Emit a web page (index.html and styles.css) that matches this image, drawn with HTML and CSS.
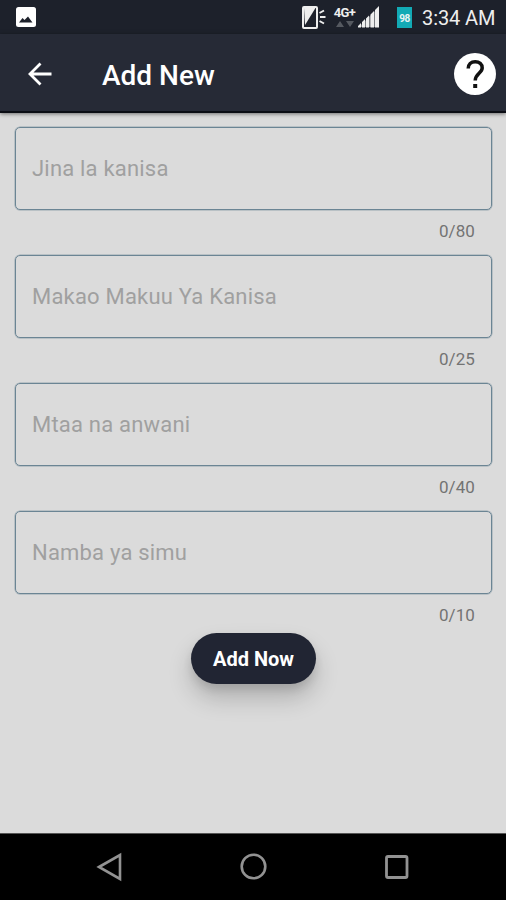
FILE: index.html
```html
<!DOCTYPE html>
<html lang="sw">
<head>
<meta charset="utf-8">
<title>Add New</title>
<link rel="stylesheet" href="styles.css">
</head>
<body>
<div class="screen">
  <div class="status">
    <svg class="photo" width="20" height="20" viewBox="0 0 20 20"><rect width="20" height="20" rx="2.5" fill="#fff"/><path d="M3 15.500 6.500 11l2 2 3.500-3.500 4.500 6z" fill="#1d212b"/></svg>
    <svg class="vibrate" width="24" height="23" viewBox="0 0 24 23"><rect x="1" y="1" width="14" height="21" rx="1" fill="#1d212b" stroke="#eee" stroke-width="2"/><path d="M2 2h11.500L3 19z" fill="#eee"/><path d="m17.500 7 4.500-2.500M18 11h5.500M17.500 15l4.500 2.500" stroke="#eee" stroke-width="2"/></svg>
    <div class="network">
      <span class="network-type">4G+</span>
      <svg width="18" height="6" viewBox="0 0 18 6"><path d="m0 6 4-6 4 6zM10 0h8l-4 6z" fill="#555960"/></svg>
    </div>
    <svg class="signal" width="22" height="22" viewBox="0 0 22 22"><path d="M0 21.500V20l3-3v4.500zM4 21.500V16l3-3v8.500zM8 21.500V12.500l3-3v12zM12.500 21.500V8.500l3.500-3.500v16.500zM17 21.500V4l4-4v21.500z" fill="#eee"/><path d="M1 21 21 1v20z" fill="#eee" opacity=".45"/></svg>
    <span class="battery">98</span>
    <span class="time">3:34 AM</span>
  </div>
  <header class="appbar">
    <svg class="back" width="24" height="24" viewBox="0 0 24 24"><path d="M12.500 1.500 2 12l10.500 10.500M2 12h21.500" fill="none" stroke="#fff" stroke-width="2.800"/></svg>
    <h1 class="title">Add New</h1>
    <svg class="help" width="42" height="42" viewBox="0 0 42 42"><circle cx="21" cy="21" r="21" fill="#fff"/><path d="M14.200 15.500c0-4 2.900-6.800 7-6.800s7 2.500 7 6.300c0 5-7 5.800-7 12.500" fill="none" stroke="#111" stroke-width="3.500"/><rect x="19.200" y="31" width="4" height="4" fill="#111"/></svg>
  </header>
  <main class="form">
    <div class="group"><div class="field"><span class="label">Jina la kanisa</span></div><span class="count">0/80</span></div>
    <div class="group"><div class="field"><span class="label">Makao Makuu Ya Kanisa</span></div><span class="count">0/25</span></div>
    <div class="group"><div class="field"><span class="label">Mtaa na anwani</span></div><span class="count">0/40</span></div>
    <div class="group"><div class="field"><span class="label">Namba ya simu</span></div><span class="count">0/10</span></div>
    <button class="submit">Add Now</button>
  </main>
  <nav class="nav">
    <svg width="26" height="30" viewBox="0 0 26 30"><path d="M3 15 24 3v24z" fill="none" stroke="#929292" stroke-width="2.600"/></svg>
    <svg width="28" height="28" viewBox="0 0 28 28"><circle cx="13.500" cy="13.500" r="11.800" fill="none" stroke="#929292" stroke-width="2.600"/></svg>
    <svg width="24" height="24" viewBox="0 0 24 24"><rect x="1.500" y="1.500" width="20.500" height="21" rx="1.500" fill="none" stroke="#929292" stroke-width="2.800"/></svg>
  </nav>
</div>
</body>
</html>
```

FILE: styles.css
```css
* { box-sizing: border-box; }
body { margin: 0; font-family: Roboto, "Liberation Sans", sans-serif; }
.screen { width: 506px; height: 900px; display: flex; flex-direction: column; background: #dbdbdb; overflow: hidden; }
.status { height: 34px; background: #1d212b; display: flex; align-items: flex-start; padding: 6px 11px 0 16px; color: #eee; flex: none; }
.photo { margin: 1px auto 0 0; }
.vibrate { margin-right: 7px; }
.network { width: 23px; height: 22px; display: flex; flex-direction: column; align-items: center; margin-right: 2px; }
.network-type { font-size: 13px; font-weight: 700; line-height: 14px; letter-spacing: -0.6px; margin-bottom: 1px; }
.network svg { flex: none; }
.signal { margin-right: 17px; }
.battery { width: 15px; height: 21px; margin: 1px 10px 0 0; background: #12aab5; color: #e8f4f4; font-size: 10px; font-weight: 700; line-height: 23px; text-align: center; letter-spacing: -0.5px; }
.time { width: 73px; font-size: 20px; line-height: 25px; letter-spacing: -0.1px; white-space: nowrap; }
.appbar { height: 79px; flex: none; background: #262a36; display: flex; align-items: center; padding: 0 10px 2px 28px; border-bottom: 2px solid #0b0d14; box-shadow: 0 1px 4px rgba(0,0,0,.5); z-index: 1; }
.title { margin: 8px auto 0 50px; font-size: 28px; line-height: 32px; font-weight: 500; color: #fff; }
.back, .help { flex: none; margin-top: 4px; }
.form { flex: 1; padding: 14px 14px 0 15px; display: flex; flex-direction: column; }
.group { height: 128px; display: flex; flex-direction: column; }
.field { height: 83px; border: 1px solid #6b8594; border-radius: 5px; padding: 0 16px; display: flex; align-items: center; box-shadow: 0 0 0 .5px rgba(107,133,148,.6); }
.label { color: #a0a0a0; font-size: 22px; line-height: 28px; letter-spacing: .2px; }
.count { align-self: flex-end; margin: 11px 17px 0 0; font-size: 17px; line-height: 20px; color: #737373; letter-spacing: .1px; }
.submit { align-self: center; width: 125px; height: 51px; margin-top: -6px; border: 0; border-radius: 26px; background: #212533; color: #fff; font: 700 20px/24px Roboto, "Liberation Sans", sans-serif; box-shadow: 0 14px 24px rgba(0,0,0,.2), 0 5px 8px rgba(0,0,0,.1); padding: 0; }
.nav { height: 67px; flex: none; background: #000; border-top: 1px solid #555; display: flex; justify-content: space-between; align-items: center; padding: 0 97px 0 96px; }
```
